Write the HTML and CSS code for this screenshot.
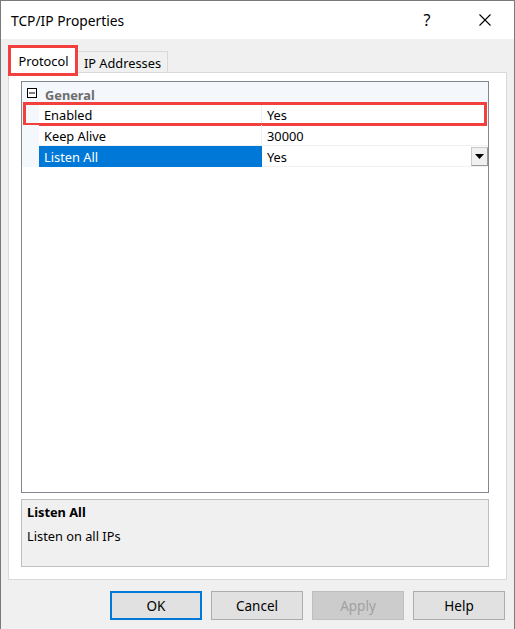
FILE: index.html
```html
<!DOCTYPE html>
<html>
<head>
<meta charset="utf-8">
<link rel="stylesheet" href="styles.css">
</head>
<body>
<div class="window">
  <div class="titlebar">
    <span class="title">TCP/IP Properties</span>
    <span class="help">?</span>
    <span class="close">
      <svg width="12" height="12" viewBox="0 0 12 12"><path d="M0.5 0.5 L11.5 11.5 M11.5 0.5 L0.5 11.5" stroke="#000" stroke-width="1.1" fill="none"/></svg>
    </span>
  </div>
  <div class="content">
    <div class="tabs">
      <div class="tab active">Protocol</div>
      <div class="tab">IP Addresses</div>
    </div>
    <div class="panel">
      <div class="grid">
        <div class="row category">
          <div class="margin">
            <svg width="10" height="10" viewBox="0 0 10 10"><rect x="0.5" y="0.5" width="9" height="9" fill="#fff" stroke="#000"/><path d="M2 5 H8" stroke="#000"/></svg>
          </div>
          <div class="catlabel">General</div>
        </div>
        <div class="row marked">
          <div class="margin"></div>
          <div class="name">Enabled</div>
          <div class="value">Yes</div>
        </div>
        <div class="row">
          <div class="margin"></div>
          <div class="name">Keep Alive</div>
          <div class="value">30000</div>
        </div>
        <div class="row">
          <div class="margin"></div>
          <div class="name selected">Listen All</div>
          <div class="value">Yes<span class="drop"><svg width="9" height="5" viewBox="0 0 9 5"><path d="M0 0 H9 L4.5 5 Z" fill="#000"/></svg></span></div>
        </div>
      </div>
      <div class="desc">
        <div class="desc-title">Listen All</div>
        <div class="desc-text">Listen on all IPs</div>
      </div>
    </div>
    <div class="buttons">
      <div class="btn default">OK</div>
      <div class="btn">Cancel</div>
      <div class="btn disabled">Apply</div>
      <div class="btn">Help</div>
    </div>
  </div>
</div>
</body>
</html>
```

FILE: styles.css
```css
html, body {
  margin: 0;
  padding: 0;
  background: #f0f0f0;
}
.window {
  width: 515px;
  height: 629px;
  box-sizing: border-box;
  border: 1px solid #7a7a7a;
  border-bottom: none;
  background: #f0f0f0;
  display: flex;
  flex-direction: column;
  font-family: "Noto Sans", "Open Sans", sans-serif;
  font-size: 12.8px;
  color: #000;
}
.titlebar {
  height: 38px;
  background: #fff;
  display: flex;
  align-items: center;
  position: relative;
}
.title {
  margin-left: 10px;
  font-size: 13.8px;
  flex: 1;
}
.help {
  width: 14px;
  text-align: center;
  font-size: 16px;
  margin-right: 45px;
  margin-top: -1px;
}
.close {
  display: flex;
  margin-right: 23px;
}
.content {
  flex: 1;
  padding: 8px 7px 0 7px;
  display: flex;
  flex-direction: column;
}
.tabs {
  display: flex;
  align-items: flex-end;
  height: 25px;
  padding-left: 2px;
  position: relative;
  z-index: 1;
}
.tab {
  box-sizing: border-box;
  height: 21px;
  border: 1px solid #d9d9d9;
  border-bottom: none;
  background: #f0f0f0;
  display: flex;
  align-items: center;
  justify-content: center;
  white-space: nowrap;
  width: 91px;
  padding-top: 1px;
}
.tab.active {
  height: 26px;
  width: 67px;
  background: #fff;
  margin-bottom: -1px;
  padding-top: 0;
  padding-bottom: 0;
  position: relative;
}
.tab.active::after {
  content: "";
  position: absolute;
  left: -3px;
  top: -3px;
  right: -2px;
  bottom: -3px;
  border: 3px solid #f2403f;
}
.panel {
  background: #fff;
  border: 1px solid #d9d9d9;
  padding: 8px 17px 12px 12px;
  display: flex;
  flex-direction: column;
  gap: 6px;
}
.grid {
  height: 412px;
  box-sizing: border-box;
  border: 1px solid #828790;
  background: #fff;
}
.row {
  display: flex;
  height: 21px;
  position: relative;
}
.row .margin {
  width: 17px;
  flex: none;
  background: #f4f7fc;
  display: flex;
  align-items: center;
  justify-content: center;
  padding-left: 1px;
  box-sizing: border-box;
}
.row.category {
  height: 22px;
  background: #f4f7fc;
}
.row.category .margin {
  align-items: flex-start;
  padding-top: 6px;
  padding-left: 2px;
}
.catlabel {
  font-weight: bold;
  color: #6d6d6d;
  padding-left: 6px;
  padding-top: 3px;
  display: flex;
  align-items: center;
}
.name {
  width: 223px;
  flex: none;
  box-sizing: border-box;
  padding-left: 5px;
  padding-top: 2px;
  display: flex;
  align-items: center;
  border-bottom: 1px solid #f0f0f0;
  border-right: 1px solid #f0f0f0;
}
.name.selected {
  background: #0078d7;
  color: #fff;
  border-color: #0078d7;
}
.value {
  flex: 1;
  padding-left: 5px;
  padding-top: 2px;
  display: flex;
  align-items: center;
  border-bottom: 1px solid #f0f0f0;
  position: relative;
}
.drop {
  position: absolute;
  right: 0;
  top: 1px;
  width: 17px;
  height: 19px;
  box-sizing: border-box;
  background: #f0f0f0;
  border: 1px solid #c8c8c8;
  border-right-color: #999;
  border-bottom-color: #999;
  display: flex;
  align-items: center;
  justify-content: center;
}
.row.marked::after {
  content: "";
  position: absolute;
  left: 1px;
  right: 1px;
  top: -2px;
  bottom: -1px;
  border: 3px solid #f2403f;
}
.desc {
  height: 68px;
  box-sizing: border-box;
  background: #f0f0f0;
  border: 1px solid #bfbfbf;
  padding: 3px 5px;
}
.desc-title {
  font-weight: bold;
  line-height: 19px;
}
.desc-text {
  margin-top: 5px;
  line-height: 19px;
}
.buttons {
  display: flex;
  justify-content: flex-end;
  gap: 9px;
  margin-top: 11px;
  padding-right: 2px;
}
.btn {
  width: 92px;
  height: 29px;
  box-sizing: border-box;
  background: #e1e1e1;
  border: 1px solid #adadad;
  display: flex;
  align-items: center;
  justify-content: center;
  font-size: 13.5px;
}
.btn.default {
  border: 2px solid #0078d7;
}
.btn.disabled {
  background: #cccccc;
  border-color: #bfbfbf;
  color: #a0a0a0;
}
```
